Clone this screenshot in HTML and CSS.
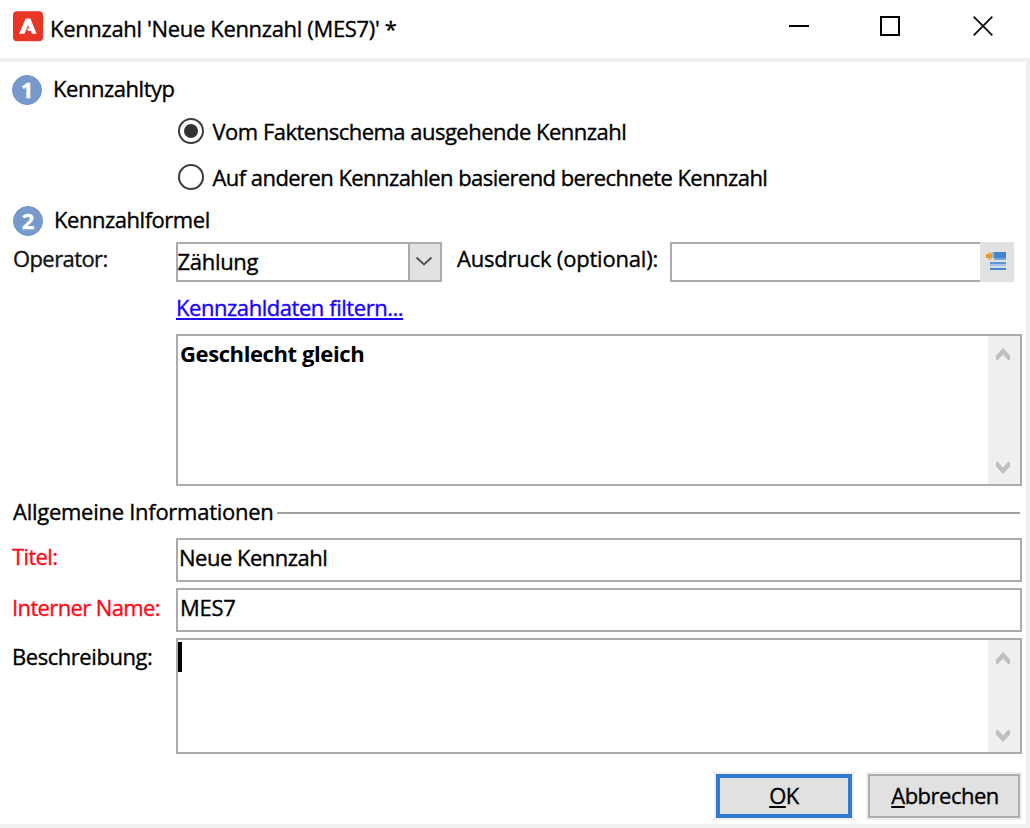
FILE: index.html
```html
<!DOCTYPE html>
<html lang="de">
<head>
<meta charset="utf-8">
<title>Kennzahl</title>
<link rel="stylesheet" href="styles.css">
</head>
<body>
<div class="window">
  <header class="titlebar">
    <svg class="logo" width="32" height="32" viewBox="0 0 32 32"><rect x="1" y="1.3" width="30" height="30" rx="4" fill="#e93526"/><path d="M13.6 8.6h4.8l6.2 15.2h-4.6l-1.3-2.9h-2.6l-1.2-2.4h2.6l-1.4-3.3-3.6 8.6H7.2z" fill="#fff"/></svg>
    <h1 class="caption">Kennzahl 'Neue Kennzahl (MES7)' *</h1>
    <div class="controls">
      <svg width="20" height="20" viewBox="0 0 20 20"><path d="M0 10h20" stroke="#000" stroke-width="2"/></svg>
      <svg width="20" height="20" viewBox="0 0 20 20"><rect x="1" y="1" width="18" height="18" fill="none" stroke="#000" stroke-width="2"/></svg>
      <svg width="20" height="20" viewBox="0 0 20 20"><path d="M.7.7l18.6 18.6M19.3.7L.7 19.3" stroke="#111" stroke-width="1.9"/></svg>
    </div>
  </header>
  <main class="content">
    <section class="step step-type"><span class="badge">1</span><h2 class="step-title">Kennzahltyp</h2></section>
    <div class="radios">
      <label class="option option-fact"><span class="radio checked"></span><span>Vom Faktenschema ausgehende Kennzahl</span></label>
      <label class="option option-calc"><span class="radio"></span><span>Auf anderen Kennzahlen basierend berechnete Kennzahl</span></label>
    </div>
    <section class="step step-formula"><span class="badge">2</span><h2 class="step-title">Kennzahlformel</h2></section>
    <div class="formula">
      <span class="label label-operator">Operator:</span>
      <div class="select"><span class="select-value">Zählung</span><span class="select-button"><svg width="18" height="12" viewBox="0 0 18 12"><path d="M1.5 1.5l7.5 7 7.5-7" fill="none" stroke="#505050" stroke-width="2"/></svg></span></div>
      <span class="label label-expression">Ausdruck (optional):</span>
      <div class="expression"><div class="expression-input"></div><div class="expression-button">
        <svg width="20" height="18" viewBox="0 0 20 18" shape-rendering="crispEdges"><path d="M8 0h12v6H8z" fill="#4585cf"/><path d="M8 6h12v2H8z" fill="#7aa5dc"/><path d="M6 0h2v6H6z" fill="#9bb8cf"/><path d="M2 0h4v8H2z" fill="#e7bf80"/><path d="M0 2h6v4H0z" fill="#e39a35"/><path d="M4 10h16v2H4z" fill="#5e94d5"/><path d="M4 12h16v2H4z" fill="#a6c0e3"/><path d="M4 14h16v2H4z" fill="#d3deed"/><path d="M4 16h16v2H4z" fill="#4585cf"/></svg>
      </div></div>
    </div>
    <a class="filter-link">Kennzahldaten filtern...</a>
    <div class="textbox filter-box"><span class="filter-text">Geschlecht gleich</span>
      <div class="scrollbar"><svg width="14" height="12" viewBox="0 0 14 12"><path d="M0 12V7.500l7-7.500 7 7.500V12h-2L7 6.500 2 12z" fill="#bfbfbf"/></svg><svg width="14" height="12" viewBox="0 0 14 12"><path d="M0 0v4.500L7 12l7-7.500V0h-2L7 5.500 2 0z" fill="#bfbfbf"/></svg></div>
    </div>
    <div class="divider"><span>Allgemeine Informationen</span></div>
    <div class="field field-title"><span class="label required">Titel:</span><div class="input">Neue Kennzahl</div></div>
    <div class="field field-name"><span class="label required">Interner Name:</span><div class="input">MES7</div></div>
    <div class="field field-description"><span class="label">Beschreibung:</span>
      <div class="textbox"><span class="caret"></span>
        <div class="scrollbar"><svg width="14" height="12" viewBox="0 0 14 12"><path d="M0 12V7.500l7-7.500 7 7.500V12h-2L7 6.500 2 12z" fill="#bfbfbf"/></svg><svg width="14" height="12" viewBox="0 0 14 12"><path d="M0 0v4.500L7 12l7-7.500V0h-2L7 5.500 2 0z" fill="#bfbfbf"/></svg></div>
      </div>
    </div>
    <footer class="actions">
      <div class="button primary"><span><span class="key">O</span>K</span></div>
      <div class="button"><span><span class="key">A</span>bbrechen</span></div>
    </footer>
  </main>
</div>
</body>
</html>
```
FILE: styles.css
```css
* { box-sizing: border-box; }
body {
  margin: 0;
  background: #fff;
  color: #000;
  font: 400 22px/30px "Open Sans", "Noto Sans", sans-serif;
  letter-spacing: -0.5px;
  -webkit-text-stroke: 0.35px currentColor;
  white-space: nowrap;
}
svg { display: block; flex: none; }
h1, h2 { margin: 0; font: inherit; }
.window { width: 1030px; height: 828px; display: flex; flex-direction: column; overflow: hidden; }

.titlebar { height: 58px; padding: 11px 37px 0 12px; display: flex; align-items: flex-start; }
.logo { margin-top: -1px; }
.caption { margin: 2px 0 0 6px; letter-spacing: -0.34px; }
.controls { margin: 5px 0 0 auto; display: flex; }
.controls svg { margin-left: 71px; }
.controls svg:last-child { margin-left: 73px; }

.content {
  height: 770px;
  border: 4px solid #f0f0f0;
  border-left: 0;
  padding: 11px 4px 0 12px;
  display: flex;
  flex-direction: column;
}
.step { display: flex; }
.badge {
  width: 30px; height: 30px; margin-top: 2px;
  border: 1px solid #6a93c8; border-radius: 50%;
  background: #7899cc; color: #fff;
  font-weight: 700; font-size: 22px; line-height: 26px; text-align: center; letter-spacing: 0;
}
.step-title { margin-left: 11px; }
.step-type { height: 43px; letter-spacing: -0.47px; }
.step-formula { height: 38px; margin-top: 12px; padding-left: 1px; letter-spacing: -0.47px; }

.radios { display: flex; flex-direction: column; gap: 16px; padding-left: 166px; }
.option { display: flex; height: 30px; }
.option-fact { letter-spacing: -0.51px; }
.option-calc { letter-spacing: -0.56px; }
.radio { width: 26px; height: 26px; margin: 2px 8.500px 0 0; border: 2px solid #3c3c3c; border-radius: 50%; }
.checked { padding: 4px; }
.checked::before { content: ""; display: block; width: 14px; height: 14px; border-radius: 50%; background: #333; }

.formula { display: flex; height: 40px; }
.label { display: block; flex: none; }
.label-operator { width: 164px; margin-top: 1px; padding-left: 1px; letter-spacing: -0.6px; color: #111; }
.select { width: 266px; border: 2px solid #abaab1; display: flex; }
.select-value { flex: 1; padding-top: 2px; letter-spacing: -0.3px; text-indent: -0.500px; }
.select-button { width: 32px; border-left: 2px solid #abaab1; background: #e1e1e1; padding: 12px 0 0 5px; }
.label-expression { margin: 1px 0 0 15px; width: 213px; letter-spacing: -0.2px; }
.expression { display: flex; width: 344px; }
.expression-input { flex: 1; border: 2px solid #abaab1; border-right: 0; }
.expression-button { width: 34px; background: #e1e1e1; padding: 10px 0 0 6px; }

.filter-link {
  align-self: flex-start; height: 28px; line-height: 30px; margin: 10px 0 0 164px;
  color: #1a00ff; letter-spacing: -0.45px;
  text-decoration: underline; text-decoration-thickness: 2px; text-underline-offset: 2px; text-decoration-skip-ink: none;
}
.textbox { width: 846px; border: 2px solid #abaab1; display: flex; justify-content: space-between; }
.filter-box { height: 152px; margin: 14px 0 0 164px; }
.filter-text { padding: 2px 0 0 2px; font-weight: 700; letter-spacing: -0.4px; -webkit-text-stroke: 0; }
.scrollbar {
  width: 32px; background: #efefef; padding: 12px 2px 10px 0;
  display: flex; flex-direction: column; align-items: center; justify-content: space-between;
}

.divider { height: 30px; margin: 10px 2px 0 1px; display: flex; letter-spacing: -0.27px; }
.divider::after { content: ""; flex: 1; height: 2px; margin: 16px 0 0 3px; background: #a0a0a0; }

.field { display: grid; grid-template-columns: 164px 846px; }
.field .label { margin-top: 3px; letter-spacing: -0.45px; }
.input { height: 44px; border: 2px solid #abaab1; padding: 2px 0 0 1px; }
.field .required { color: #ff0a1a; letter-spacing: -0.63px; }
.field-title { margin-top: 12px; }
.field-name { margin-top: 6px; }
.field-name .required { margin-top: 4px; }
.field-name .input { letter-spacing: -0.3px; padding-left: 2px; }
.field-description { margin-top: 6px; }
.field-description .textbox { height: 116px; }
.caret { width: 4px; height: 30px; margin-top: 2px; background: #000; }

.actions { display: flex; justify-content: flex-end; gap: 12px; margin-top: 18px; }
.button {
  width: 156px; height: 48px; border: 2px solid #f0f0f0; background: #e1e1e1;
  box-shadow: inset 0 0 0 2px #adadad; padding: 6px 0 0 2px; text-align: center; letter-spacing: -0.5px;
}
.primary { width: 140px; padding-left: 0; box-shadow: inset 0 0 0 4px #3079d2; }
.key { text-decoration: underline; text-decoration-thickness: 2px; text-underline-offset: 2px; }
```
